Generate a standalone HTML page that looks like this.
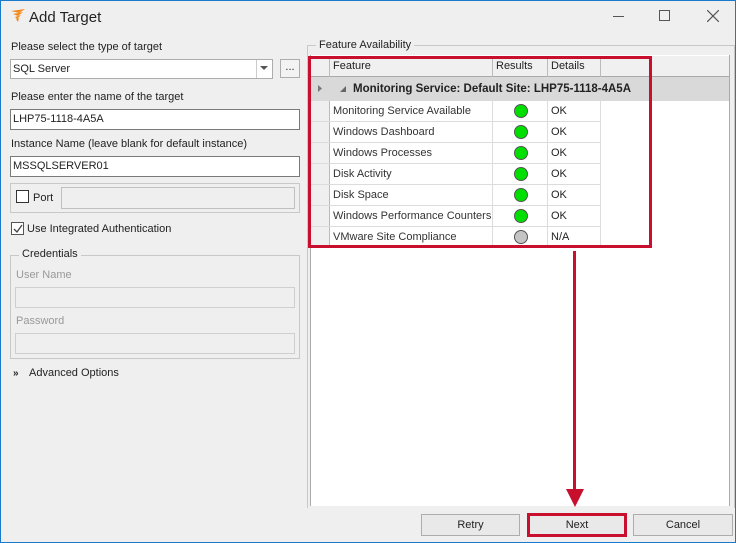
<!DOCTYPE html>
<html><head><meta charset="utf-8"><style>
*{box-sizing:border-box;margin:0;padding:0}
body{width:736px;height:543px;overflow:hidden;background:#efefef;font-family:"Liberation Sans",sans-serif;font-size:11px;color:#222}
.win{position:absolute;left:0;top:0;width:736px;height:543px;border:1px solid #1979ca;border-top:1px solid #1979ca;background:#efefef}
.a{position:absolute}
.t{position:absolute;white-space:nowrap;line-height:13px}
.inp{position:absolute;background:#fff;border:1px solid #7a7a7a}
.dis{position:absolute;background:#efefef;border:1px solid #cfcfcf}
.grp{position:absolute;border:1px solid #c8c8c8}
.cb{position:absolute;width:13px;height:13px;border:1px solid #333;background:#fff}
.btn{position:absolute;height:22px;border:1px solid #adadad;background:#e9e9e9;text-align:center;line-height:20px;font-size:11px}
.row{position:absolute;left:310px;width:290px;height:21px;border-bottom:1px solid #dcdcdc}
.dot{position:absolute;width:14px;height:14px;border-radius:50%;border:1px solid #555;background:#00e000}
</style></head><body><div class="win">
<svg class="a" style="left:9px;top:8px" width="16" height="14" viewBox="0 0 16 14"><path d="M1 2 L15 0 L9 4 Z M3 5 L13 3 L8 7 Z M5 8 L11 6 L7 10 Z M6 10 L8 13 L9 9Z" fill="#f38b1c"/></svg>
<div class="t" style="left:28px;top:8px;font-size:15px;line-height:17px;color:#222">Add Target</div>
<div class="a" style="left:612px;top:15px;width:11px;height:1px;background:#555"></div>
<div class="a" style="left:658px;top:9px;width:11px;height:11px;border:1px solid #555"></div>
<svg class="a" style="left:706px;top:9px" width="12" height="12"><path d="M0 0L12 12M12 0L0 12" stroke="#555" stroke-width="1.2"/></svg>

<div class="t" style="left:10px;top:40px">Please select the type of target</div>
<div class="inp" style="left:9px;top:58px;width:263px;height:20px;border-color:#adadad"></div>
<div class="t" style="left:12px;top:62px">SQL Server</div>
<div class="a" style="left:255px;top:59px;width:1px;height:18px;background:#ccc"></div>
<svg class="a" style="left:259px;top:65px" width="9" height="5"><path d="M0 0H8L4 4Z" fill="#555"/></svg>
<div class="a" style="left:279px;top:58px;width:20px;height:19px;border:1px solid #adadad;background:#f3f3f3;text-align:center;line-height:14px">...</div>

<div class="t" style="left:10px;top:90px">Please enter the name of the target</div>
<div class="inp" style="left:9px;top:108px;width:290px;height:21px"></div>
<div class="t" style="left:12px;top:112px">LHP75-1118-4A5A</div>
<div class="t" style="left:10px;top:137px">Instance Name (leave blank for default instance)</div>
<div class="inp" style="left:9px;top:155px;width:290px;height:21px"></div>
<div class="t" style="left:12px;top:159px">MSSQLSERVER01</div>

<div class="grp" style="left:9px;top:182px;width:290px;height:30px"></div>
<div class="cb" style="left:15px;top:189px"></div>
<div class="t" style="left:32px;top:191px">Port</div>
<div class="dis" style="left:60px;top:186px;width:234px;height:22px;border-color:#c0c0c0"></div>

<div class="cb" style="left:10px;top:221px;border-color:#555"></div>
<svg class="a" style="left:11px;top:222px" width="12" height="12"><path d="M2 6L5 9L10 2" stroke="#444" stroke-width="1.3" fill="none"/></svg>
<div class="t" style="left:26px;top:222px">Use Integrated Authentication</div>

<div class="grp" style="left:9px;top:254px;width:290px;height:104px"></div>
<div class="t" style="left:18px;top:247px;padding:0 3px;background:#efefef">Credentials</div>
<div class="t" style="left:15px;top:268px;color:#999">User Name</div>
<div class="dis" style="left:14px;top:286px;width:280px;height:21px"></div>
<div class="t" style="left:15px;top:314px;color:#999">Password</div>
<div class="dis" style="left:14px;top:332px;width:280px;height:21px"></div>
<div class="t" style="left:12px;top:366px;font-weight:bold;font-size:10px">»</div>
<div class="t" style="left:28px;top:366px">Advanced Options</div>

<!-- right group -->
<div class="a" style="left:306px;top:44px;width:428px;height:463px;border:1px solid #c8c8c8;border-bottom:none"></div>
<div class="t" style="left:315px;top:38px;padding:0 3px;background:#efefef">Feature Availability</div>
<div class="a" style="left:309px;top:54px;width:420px;height:451px;background:#fff;border-left:1px solid #aaa;border-right:1px solid #aaa"></div>
<div class="a" style="left:310px;top:55px;width:418px;height:21px;background:#f0f0f0;border-bottom:1px solid #aaa"></div>
<div class="a" style="left:328px;top:55px;width:1px;height:192px;background:#bbb"></div>
<div class="a" style="left:491px;top:55px;width:1px;height:21px;background:#bbb"></div>
<div class="a" style="left:546px;top:55px;width:1px;height:21px;background:#bbb"></div>
<div class="a" style="left:599px;top:55px;width:1px;height:21px;background:#bbb"></div>
<div class="t" style="left:332px;top:59px">Feature</div>
<div class="t" style="left:495px;top:59px">Results</div>
<div class="t" style="left:550px;top:59px">Details</div>
<div class="a" style="left:310px;top:76px;width:418px;height:24px;background:#d9d9d9"></div>
<svg class="a" style="left:317px;top:84px" width="5" height="7"><path d="M0 0L4 3.5L0 7Z" fill="#777"/></svg>
<svg class="a" style="left:339px;top:85px" width="6" height="6"><path d="M6 0V6H0Z" fill="#666"/></svg>
<div class="t" style="left:352px;top:82px;font-weight:bold;font-size:11.5px">Monitoring Service: Default Site: LHP75-1118-4A5A</div>
<div class="a" style="left:310px;top:100px;width:18px;height:147px;background:#efefef"></div>
<div class="a" style="left:491px;top:100px;width:1px;height:147px;background:#dcdcdc"></div>
<div class="a" style="left:546px;top:100px;width:1px;height:147px;background:#dcdcdc"></div>
<div class="a" style="left:599px;top:100px;width:1px;height:147px;background:#dcdcdc"></div>

<div class="row" style="top:100px"></div><div class="row" style="top:121px"></div><div class="row" style="top:142px"></div><div class="row" style="top:163px"></div><div class="row" style="top:184px"></div><div class="row" style="top:205px"></div><div class="row" style="top:226px"></div>
<div class="t" style="left:332px;top:104px;color:#333">Monitoring Service Available</div><div class="dot" style="left:513px;top:103px"></div><div class="t" style="left:550px;top:104px">OK</div>
<div class="t" style="left:332px;top:125px;color:#333">Windows Dashboard</div><div class="dot" style="left:513px;top:124px"></div><div class="t" style="left:550px;top:125px">OK</div>
<div class="t" style="left:332px;top:146px;color:#333">Windows Processes</div><div class="dot" style="left:513px;top:145px"></div><div class="t" style="left:550px;top:146px">OK</div>
<div class="t" style="left:332px;top:167px;color:#333">Disk Activity</div><div class="dot" style="left:513px;top:166px"></div><div class="t" style="left:550px;top:167px">OK</div>
<div class="t" style="left:332px;top:188px;color:#333">Disk Space</div><div class="dot" style="left:513px;top:187px"></div><div class="t" style="left:550px;top:188px">OK</div>
<div class="t" style="left:332px;top:209px;color:#333">Windows Performance Counters</div><div class="dot" style="left:513px;top:208px"></div><div class="t" style="left:550px;top:209px">OK</div>
<div class="t" style="left:332px;top:230px;color:#333">VMware Site Compliance</div><div class="dot" style="left:513px;top:229px;background:#c4c4c4"></div><div class="t" style="left:550px;top:230px">N/A</div>

<div class="a" style="left:307px;top:55px;width:344px;height:192px;border:3px solid #c8102e"></div>
<div class="a" style="left:572px;top:250px;width:3px;height:240px;background:#c8102e"></div>
<svg class="a" style="left:565px;top:488px" width="18" height="18"><path d="M0 0H18L9 18Z" fill="#c8102e"/></svg>

<div class="btn" style="left:420px;top:513px;width:99px">Retry</div>
<div class="btn" style="left:526px;top:512px;width:100px;height:24px;border:3px solid #c8102e;line-height:18px">Next</div>
<div class="btn" style="left:632px;top:513px;width:100px">Cancel</div>
</div></body></html>
